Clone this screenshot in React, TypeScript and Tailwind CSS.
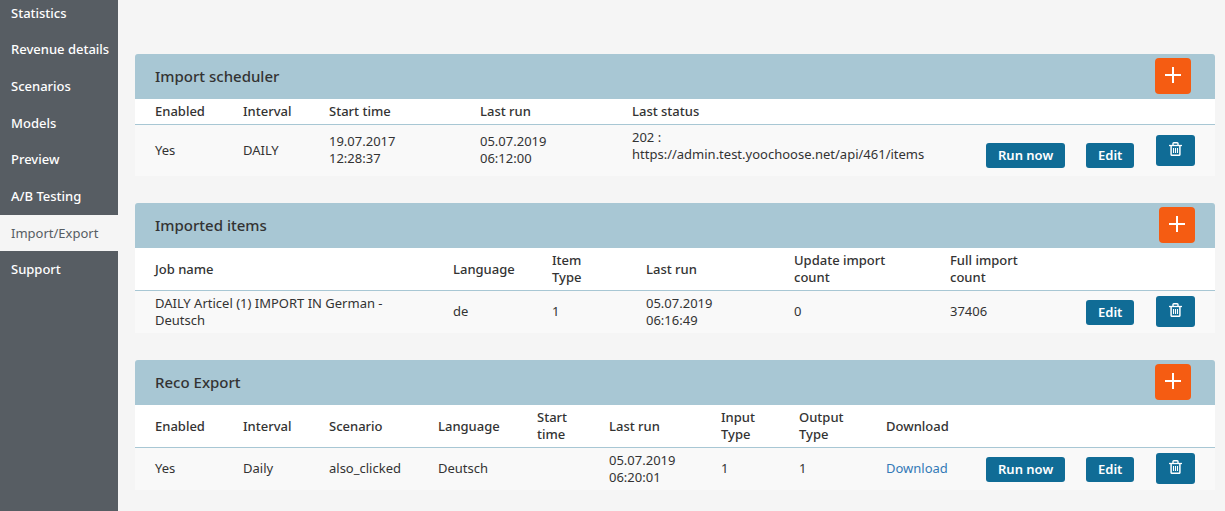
import type { ReactNode } from 'react';

type Column = { label: string; name?: string; width: string };

const navItems = [
  'Statistics',
  'Revenue details',
  'Scenarios',
  'Models',
  'Preview',
  'A/B Testing',
  'Import/Export',
  'Support',
];

function Sidebar({ active }: { active: string }) {
  return (
    <aside className="w-[118px] shrink-0 bg-[#575d63]">
      <nav className="-mt-[5px] grid h-[293px] grid-rows-8">
        {navItems.map((item) => (
          <a
            key={item}
            href="#"
            aria-current={item === active ? 'page' : undefined}
            className={
              item === active
                ? 'flex items-center bg-[#f5f5f5] pl-[11px] whitespace-nowrap text-[#575d63]'
                : 'flex items-center pl-[11px] font-medium whitespace-nowrap text-white'
            }
          >
            {item}
          </a>
        ))}
      </nav>
    </aside>
  );
}

function PlusIcon() {
  return (
    <svg width="16" height="16" viewBox="0 0 16 16" fill="none" stroke="currentColor" strokeWidth="2" aria-hidden="true">
      <path d="M8 0v16M0 8h16" />
    </svg>
  );
}

function TrashIcon() {
  return (
    <svg width="13" height="14" viewBox="0 0 13 14" fill="none" stroke="currentColor" aria-hidden="true">
      <path d="M0 3.5h13" strokeWidth="1.3" />
      <path d="M4 3.5v-2q0-.8.8-.8h3.4q.8 0 .8.8v2" strokeWidth="1.4" />
      <path d="M2.1 3.5v8.9q0 .9.9.9h7q.9 0 .9-.9v-8.9" strokeWidth="1.5" />
      <path d="M4.5 6v5M6.5 6v5M8.5 6v5" strokeWidth="1.1" />
    </svg>
  );
}

function ActionButton({ children }: { children: ReactNode }) {
  return (
    <button type="button" className="block h-[25px] rounded-[3px] bg-[#106c96] px-3 font-semibold whitespace-nowrap text-white">
      {children}
    </button>
  );
}

function DeleteButton() {
  return (
    <button
      type="button"
      aria-label="Delete"
      className="flex h-[31px] w-[39px] items-center justify-center rounded-[3px] bg-[#106c96] pb-[3px] text-white"
    >
      <TrashIcon />
    </button>
  );
}

function Panel({
  title,
  columns,
  addClass,
  rowClass,
  children,
}: {
  title: string;
  columns: Column[];
  addClass: string;
  rowClass: string;
  children: ReactNode;
}) {
  return (
    <section>
      <header className="flex h-[45px] items-center justify-between rounded-t-[3px] bg-[#a8c7d4] pl-5">
        <h2 className="text-[15px] font-medium">{title}</h2>
        <button
          type="button"
          aria-label={`Add to ${title}`}
          className={`flex size-9 items-center justify-center rounded-[4px] bg-[#f55c12] pb-[2px] text-white ${addClass}`}
        >
          <PlusIcon />
        </button>
      </header>
      <table className="w-full table-fixed border-separate border-spacing-0 text-left">
        <colgroup>
          {columns.map((c, i) => (
            <col key={i} className={c.width} />
          ))}
        </colgroup>
        <thead>
          <tr className="bg-white">
            {columns.map((c, i) => (
              <th
                key={i}
                scope="col"
                aria-label={c.name}
                className="border-b border-[#a8c7d4] pt-1 pb-[4px] font-medium whitespace-pre-line first:pl-5"
              >
                {c.label}
              </th>
            ))}
          </tr>
        </thead>
        <tbody>
          <tr className={`bg-[#f9f9f9] ${rowClass}`}>{children}</tr>
        </tbody>
      </table>
    </section>
  );
}

function Cell({ children }: { children?: ReactNode }) {
  return <td className="pb-px align-middle whitespace-pre-line first:pl-5">{children}</td>;
}

function ActionCell({ children }: { children: ReactNode }) {
  return <td className="pb-2 align-bottom">{children}</td>;
}

const schedulerColumns: Column[] = [
  { label: 'Enabled', width: 'w-[108px]' },
  { label: 'Interval', width: 'w-[86px]' },
  { label: 'Start time', width: 'w-[151px]' },
  { label: 'Last run', width: 'w-[152px]' },
  { label: 'Last status', width: 'w-auto' },
  { label: '', name: 'Run', width: 'w-[100px]' },
  { label: '', name: 'Edit', width: 'w-[70px]' },
  { label: '', name: 'Delete', width: 'w-[59px]' },
];

const itemColumns: Column[] = [
  { label: 'Job name', width: 'w-auto' },
  { label: 'Language', width: 'w-[99px]' },
  { label: 'Item\nType', width: 'w-[94px]' },
  { label: 'Last run', width: 'w-[148px]' },
  { label: 'Update import\ncount', width: 'w-[156px]' },
  { label: 'Full import\ncount', width: 'w-[136px]' },
  { label: '', name: 'Edit', width: 'w-[70px]' },
  { label: '', name: 'Delete', width: 'w-[59px]' },
];

const exportColumns: Column[] = [
  { label: 'Enabled', width: 'w-[108px]' },
  { label: 'Interval', width: 'w-[86px]' },
  { label: 'Scenario', width: 'w-auto' },
  { label: 'Language', width: 'w-[99px]' },
  { label: 'Start\ntime', width: 'w-[72px]' },
  { label: 'Last run', width: 'w-[112px]' },
  { label: 'Input\nType', width: 'w-[78px]' },
  { label: 'Output\nType', width: 'w-[87px]' },
  { label: 'Download', width: 'w-[100px]' },
  { label: '', name: 'Run', width: 'w-[100px]' },
  { label: '', name: 'Edit', width: 'w-[70px]' },
  { label: '', name: 'Delete', width: 'w-[59px]' },
];

export default function App() {
  return (
    <div className="flex min-h-screen overflow-hidden bg-[#f5f5f5] font-['Noto_Sans',sans-serif] text-[13px] leading-[17px] text-[#333]">
      <Sidebar active="Import/Export" />
      <main className="flex min-w-0 flex-1 flex-col gap-[27px] pt-[54px] pr-[10px] pl-[17px]">
        <Panel title="Import scheduler" columns={schedulerColumns} addClass="mr-6 mb-px" rowClass="h-[51px]">
          <Cell>Yes</Cell>
          <Cell>DAILY</Cell>
          <Cell>{'19.07.2017\n12:28:37'}</Cell>
          <Cell>{'05.07.2019\n06:12:00'}</Cell>
          <td className="pt-1 align-top whitespace-pre-line">
            {'202 :\nhttps://admin.test.yoochoose.net/api/461/items'}
          </td>
          <ActionCell><ActionButton>Run now</ActionButton></ActionCell>
          <ActionCell><ActionButton>Edit</ActionButton></ActionCell>
          <Cell><DeleteButton /></Cell>
        </Panel>

        <Panel title="Imported items" columns={itemColumns} addClass="mr-5 mb-px" rowClass="h-[42px]">
          <Cell>{'DAILY Articel (1) IMPORT IN German -\nDeutsch'}</Cell>
          <Cell>de</Cell>
          <Cell>1</Cell>
          <Cell>{'05.07.2019\n06:16:49'}</Cell>
          <Cell>0</Cell>
          <Cell>37406</Cell>
          <ActionCell><ActionButton>Edit</ActionButton></ActionCell>
          <Cell><DeleteButton /></Cell>
        </Panel>

        <Panel title="Reco Export" columns={exportColumns} addClass="mr-6 mb-px" rowClass="h-[42px]">
          <Cell>Yes</Cell>
          <Cell>Daily</Cell>
          <Cell>also_clicked</Cell>
          <Cell>Deutsch</Cell>
          <Cell />
          <Cell>{'05.07.2019\n06:20:01'}</Cell>
          <Cell>1</Cell>
          <Cell>1</Cell>
          <Cell><a href="#" className="text-[#337ab7]">Download</a></Cell>
          <ActionCell><ActionButton>Run now</ActionButton></ActionCell>
          <ActionCell><ActionButton>Edit</ActionButton></ActionCell>
          <Cell><DeleteButton /></Cell>
        </Panel>
      </main>
    </div>
  );
}
